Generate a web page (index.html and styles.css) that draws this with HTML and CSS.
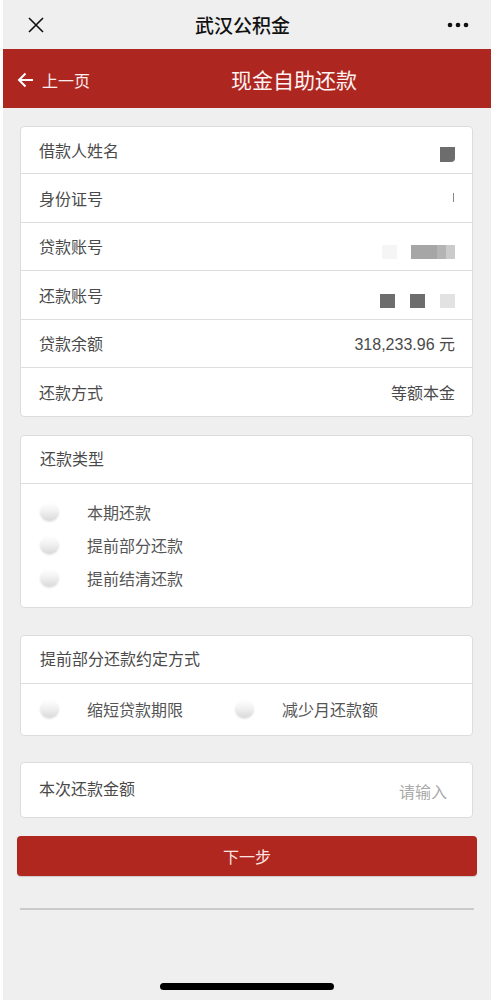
FILE: index.html
```html
<!DOCTYPE html>
<html>
    <head>
        <meta charset="utf-8">
        <title>现金自助还款</title>
        <link rel="stylesheet" href="styles.css">
    </head>
    <body>
        <div class="phone">
            <!-- wechat top bar -->
            <div class="topbar">
                <svg class="close" width="16" height="16" viewBox="0 0 16 16">
                    <path d="M1 1L15 15M15 1L1 15" stroke="#111" stroke-width="1.6" fill="none"/>
                </svg>
                <div class="topbar-title">武汉公积金</div>
                <svg class="more" width="22" height="6" viewBox="0 0 22 6">
                    <circle cx="3" cy="3" r="2.3" fill="#111"/>
                    <circle cx="11" cy="3" r="2.3" fill="#111"/>
                    <circle cx="19" cy="3" r="2.3" fill="#111"/>
                </svg>
            </div>

            <div class="header">
                <a class="back">
                    <svg width="17" height="16" viewBox="0 0 17 16">
                        <path d="M16 8H2M8.5 1.5L2 8L8.5 14.5" stroke="#fff" stroke-width="2" fill="none"/>
                    </svg>
                    <span>上一页</span>
                </a>
                <div class="header-title">现金自助还款</div>
            </div>

            <div class="card">
                <div class="row">
                    <span class="label">借款人姓名</span>
                    <span class="value"><i class="blot b-dark cut"></i></span>
                </div>
                <div class="row">
                    <span class="label">身份证号</span>
                    <span class="value"><i class="tick"></i></span>
                </div>
                <div class="row">
                    <span class="label">贷款账号</span>
                    <span class="value low"><i class="blot b-faint"></i><i class="blot b-mid wide"></i></span>
                </div>
                <div class="row">
                    <span class="label">还款账号</span>
                    <span class="value low"><i class="blot b-dark"></i><i class="blot b-dark"></i><i class="blot b-light"></i></span>
                </div>
                <div class="row">
                    <span class="label">贷款余额</span>
                    <span class="value num">318,233.96 元</span>
                </div>
                <div class="row">
                    <span class="label">还款方式</span>
                    <span class="value">等额本金</span>
                </div>
            </div>

            <div class="card card-type">
                <div class="card-head">还款类型</div>
                <div class="radios">
                    <label class="radio"><i class="dot"></i>本期还款</label>
                    <label class="radio"><i class="dot"></i>提前部分还款</label>
                    <label class="radio"><i class="dot"></i>提前结清还款</label>
                </div>
            </div>

            <div class="card card-way">
                <div class="card-head">提前部分还款约定方式</div>
                <div class="radios inline">
                    <label class="radio"><i class="dot"></i>缩短贷款期限</label>
                    <label class="radio"><i class="dot"></i>减少月还款额</label>
                </div>
            </div>

            <div class="card card-amount">
                <span class="label">本次还款金额</span>
                <span class="placeholder">请输入</span>
            </div>

            <button class="next">下一步</button>

            <div class="rule"></div>

            <div class="home"></div>
        </div>
    </body>
</html>
```

FILE: styles.css
```css
body {
    margin: 0;
    background: #fff;
    font-family: "Liberation Sans", "Noto Sans CJK SC", sans-serif;
}

.phone {
    width: 488px;
    height: 1000px;
    margin-left: 3px;
    background: #efefef;
    overflow: hidden;
}

.topbar {
    height: 49px;
    display: flex;
    align-items: center;
    padding: 0 22px 0 25px;
}
.topbar-title {
    flex: 1;
    text-align: center;
    font-size: 19px;
    font-weight: 500;
    color: #111;
    margin-right: 6px;
}

.header {
    height: 59px;
    background: #ae2620;
    display: flex;
    align-items: center;
    color: #fff;
}
.back {
    width: 86px;
    padding-left: 14px;
    display: flex;
    align-items: center;
    gap: 8px;
    font-size: 16px;
    color: #fbeeee;
    margin-top: 2px;
}
.back svg {
    display: block;
}
.header-title {
    flex: 1;
    text-align: center;
    font-size: 21px;
    color: #fdf3f2;
    padding-right: 6px;
}

.card {
    margin: 18px 18px 0 17px;
    background: #fff;
    border: 1px solid #dcdcdc;
    border-radius: 4px;
}

.row {
    height: 47.5px;
    display: flex;
    align-items: center;
    justify-content: space-between;
    padding: 0 17px 0 18px;
    border-top: 1px solid #dedede;
}
.row:first-child {
    border-top: none;
    height: 46px;
}

.label {
    font-size: 16px;
    color: #4a4a4a;
}
.value {
    font-size: 16px;
    color: #4a4a4a;
    display: flex;
    align-items: center;
}
.value.low {
    margin-top: 12px;
}

/* blurred personal data */
.blot {
    display: block;
    width: 15px;
    height: 14px;
    margin-left: 15px;
    background: #6c6c6c;
}
.blot.cut {
    height: 15px;
    margin-top: 9px;
    border-bottom-right-radius: 4px;
}
.b-dark { background: #6d6d6d; }
.b-mid { background: linear-gradient(90deg, #a6a6a6 0 60%, #b4b4b4 60% 80%, #cbcbcb 80%); }
.b-light { background: #e2e2e2; }
.b-faint { background: #f5f5f5; margin-left: 0; }
.blot.wide { width: 44px; margin-left: 14px; }
.tick {
    display: block;
    width: 1px;
    height: 9px;
    background: #888;
    margin-right: 1px;
}

.card-head {
    height: 47px;
    line-height: 47px;
    padding-left: 19px;
    font-size: 16px;
    color: #4a4a4a;
    border-bottom: 1px solid #dedede;
}
.card-type {
    margin-top: 18px;
}
.radios {
    padding: 12px 19px;
}
.radio {
    height: 33px;
    display: flex;
    align-items: center;
    font-size: 16px;
    color: #555;
}
.dot {
    display: block;
    width: 19px;
    height: 18px;
    border-radius: 50%;
    margin-right: 28px;
    background: linear-gradient(180deg, #ffffff 0%, #f1f1f1 45%, #d9d9d9 100%);
    box-shadow: 0 1px 2px rgba(0, 0, 0, 0.12);
}

.card-way {
    margin-top: 27px;
}
.radios.inline {
    display: flex;
    padding: 9px 19px;
}
.radios.inline .radio {
    width: 195px;
}

.card-amount {
    margin-top: 26px;
    height: 54px;
    display: flex;
    justify-content: space-between;
    padding: 0 25px 0 18px;
}
.card-amount .label {
    margin-top: 13px;
}
.card-amount .placeholder {
    margin-top: 16px;
    font-size: 16px;
    color: #aaa;
}

.next {
    display: block;
    width: 460px;
    height: 40px;
    margin: 18px 0 0 14px;
    border: none;
    border-radius: 4px;
    background: #b0271f;
    color: #fbe4e2;
    font-family: "Liberation Sans", "Noto Sans CJK SC", sans-serif;
    font-size: 16px;
    box-shadow: 0 1px 1px rgba(0, 0, 0, 0.15);
}

.rule {
    height: 2px;
    margin: 32px 17px 0 17px;
    background: #cbcbcb;
}

.home {
    width: 174px;
    height: 7px;
    margin: 73px auto 0 auto;
    border-radius: 4px;
    background: #000;
}
```
